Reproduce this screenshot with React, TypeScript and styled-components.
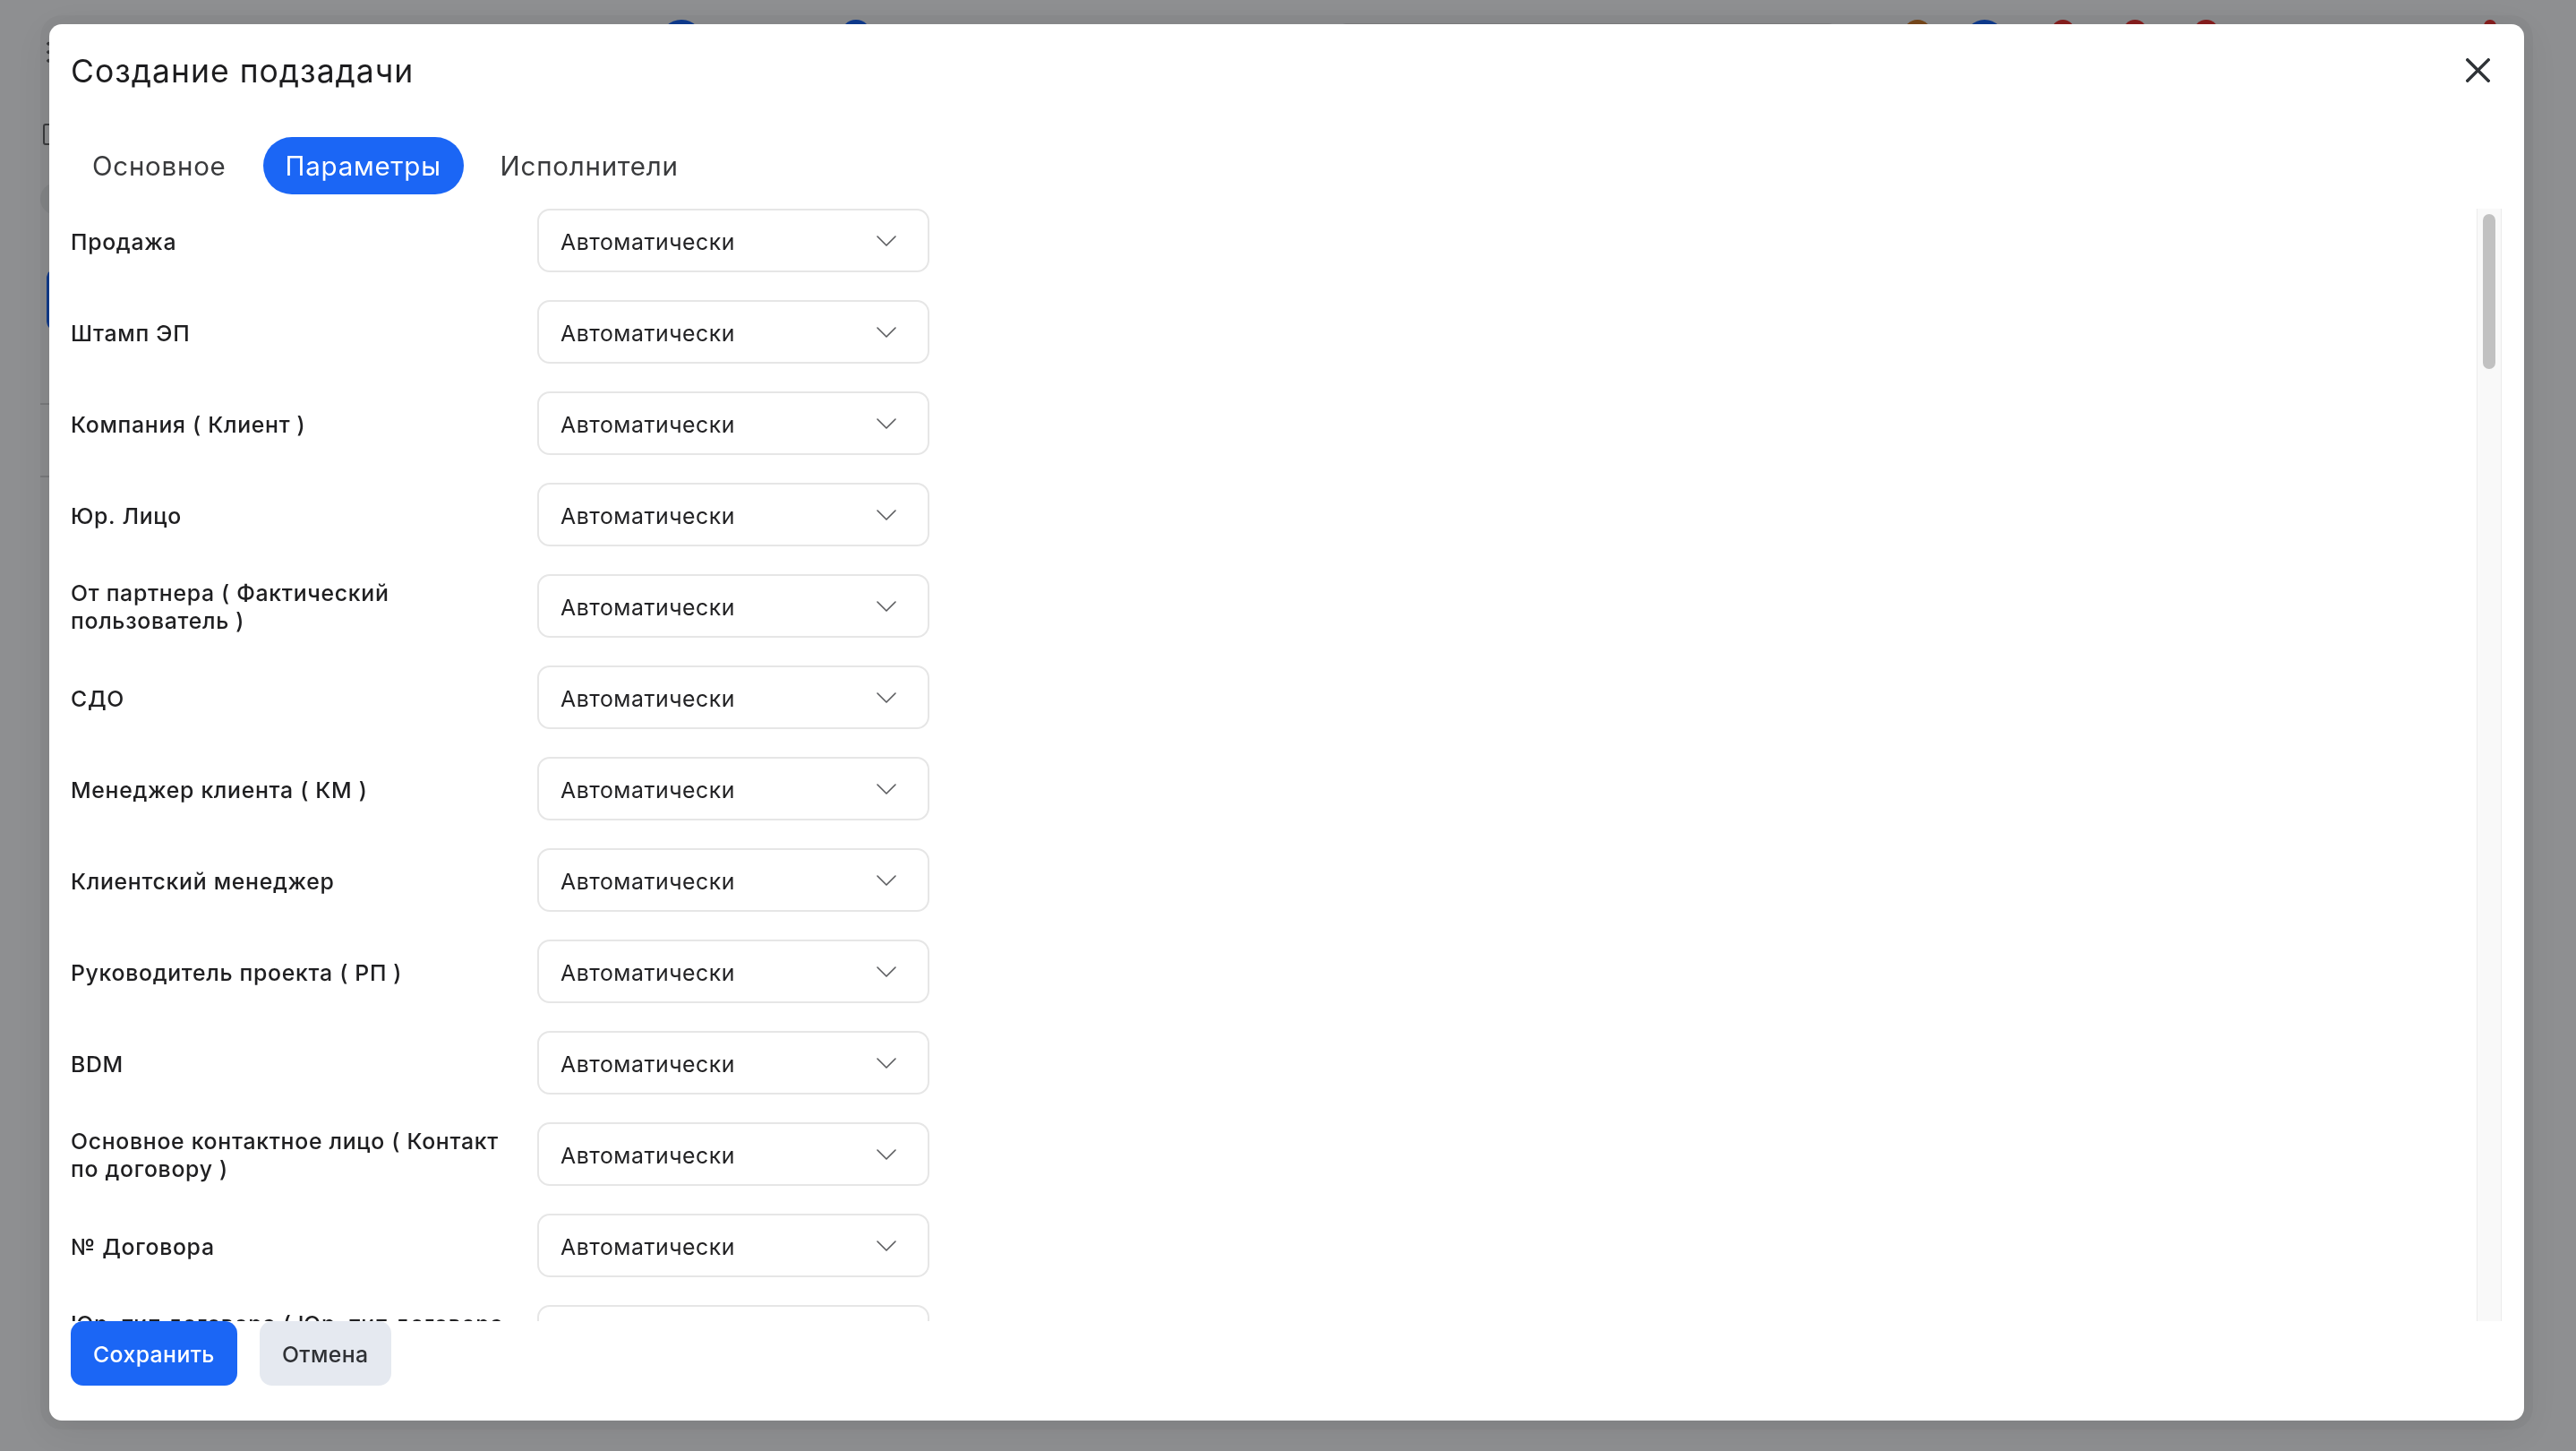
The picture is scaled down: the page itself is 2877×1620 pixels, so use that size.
import React from "react";
import styled, { createGlobalStyle } from "styled-components";

const GlobalStyle = createGlobalStyle`
  *, *::before, *::after { box-sizing: border-box; }
  html, body { margin: 0; padding: 0; }
  body {
    background: #8e8f91;
    font-family: Inter, "Noto Sans", "Liberation Sans", sans-serif;
    overflow: hidden;
  }
`;

/* ---------- dimmed application behind the dialog ---------- */

const Screen = styled.div`
  position: relative;
  width: 100vw;
  height: 100vh;
  overflow: hidden;
  background: #8e8f91;
`;

const AppShell = styled.div`
  display: flex;
  flex-direction: column;
  height: 100%;
`;

const TopBar = styled.div`
  display: flex;
  align-items: flex-start;
  height: 60px;
  padding-top: 22px;
`;

const TopDot = styled.span<{ $ml: number; $w: number; $color: string }>`
  display: block;
  margin-left: ${(p) => p.$ml}px;
  width: ${(p) => p.$w}px;
  height: ${(p) => p.$w}px;
  border-radius: 50%;
  background: ${(p) => p.$color};
`;

const TopSearch = styled.span<{ $ml: number }>`
  display: block;
  margin-left: ${(p) => p.$ml}px;
  margin-top: 4px;
  width: 554px;
  height: 40px;
  border-radius: 8px;
  background: #7f8082;
`;

const Rail = styled.aside`
  display: flex;
  flex-direction: column;
  align-items: flex-start;
  padding-left: 45px;
`;

const RailKebab = styled.span`
  margin: -16px 0 0 7px;
  width: 4px;
  height: 28px;
  background: radial-gradient(circle, #3b3c3e 1.6px, transparent 2px) 0 0 / 4px 9.5px repeat-y;
`;

const RailHome = styled.span`
  margin: 66px 0 0 3px;
  width: 22px;
  height: 24px;
  border: 2px solid #3b3c3e;
  border-radius: 3px;
`;

const RailAvatar = styled.span`
  margin-top: 42px;
  width: 36px;
  height: 36px;
  border-radius: 50%;
  background: #858789;
`;

const RailButton = styled.span`
  margin: 59px 0 0 7px;
  width: 60px;
  height: 71px;
  border-radius: 12px;
  background: #0f3a8d;
`;

const RailRule = styled.span<{ $mt: number }>`
  margin-top: ${(p) => p.$mt}px;
  width: 60px;
  height: 2px;
  background: #7b7c7e;
`;

/* ---------- dialog ---------- */

const Overlay = styled.div`
  position: fixed;
  inset: 0;
  display: flex;
  align-items: flex-start;
  padding: 27px 0 0 55px;
`;

const Modal = styled.div`
  width: 2764px;
  height: 1559px;
  background: #ffffff;
  border-radius: 14px;
  box-shadow: 0 0 0 10px rgba(0, 0, 0, 0.035), 0 10px 40px rgba(0, 0, 0, 0.08);
  display: flex;
  flex-direction: column;
  padding: 30px 25px 39px 24px;
`;

const Header = styled.header`
  display: flex;
  align-items: center;
  justify-content: space-between;
  height: 42px;
  flex-shrink: 0;
`;

const Title = styled.h2`
  margin: 0;
  padding-top: 3px;
  font-size: 35.5px;
  line-height: 42px;
  font-weight: 400;
  color: #1d1d1f;
  letter-spacing: 1px;
`;

const CloseButton = styled.button`
  width: 29px;
  height: 29px;
  margin-right: 12px;
  padding: 0;
  border: 0;
  background: none;
  display: grid;
  place-items: center;
  color: #2f3337;
  cursor: pointer;
`;

const Tabs = styled.nav`
  display: flex;
  gap: 16px;
  margin: 54px 0 0 -1px;
  flex-shrink: 0;
`;

const Tab = styled.button<{ $active?: boolean }>`
  height: 64px;
  padding: 0 25px;
  border: 0;
  border-radius: 32px;
  font-family: inherit;
  font-size: 29.5px;
  font-weight: 400;
  letter-spacing: 0.75px;
  background: ${(p) => (p.$active ? "#1b66f5" : "transparent")};
  color: ${(p) => (p.$active ? "#ffffff" : "#3a3b3d")};
  cursor: pointer;
`;

const Body = styled.div`
  flex: 1;
  min-height: 0;
  display: flex;
  margin-top: 16px;
`;

const FieldList = styled.div`
  flex: 1;
  min-width: 0;
  overflow: hidden;
  display: flex;
  flex-direction: column;
  gap: 31px;
`;

const Field = styled.div`
  display: grid;
  grid-template-columns: 497px 438px;
  column-gap: 24px;
  align-items: center;
  flex-shrink: 0;
`;

const Label = styled.label`
  padding-top: 3px;
  font-size: 24.8px;
  line-height: 31px;
  font-weight: 500;
  color: #1f1f21;
  letter-spacing: 0.7px;
`;

const Select = styled.div`
  height: 71px;
  border: 2px solid #e6e6e6;
  border-radius: 14px;
  display: flex;
  align-items: center;
  justify-content: space-between;
  padding: 3px 35px 0 24px;
  font-size: 24.8px;
  color: #222224;
  letter-spacing: 0.55px;
  background: #fff;
`;

const Chevron = styled.svg`
  width: 22px;
  height: 12px;
  flex-shrink: 0;
  margin-top: -3px;
`;

const ScrollTrack = styled.div`
  width: 28px;
  flex-shrink: 0;
  background: #f9f9f9;
  border-left: 1px solid #ebebeb;
  border-right: 1px solid #ebebeb;
  padding: 6px 6px;
`;

const ScrollThumb = styled.div`
  height: 173px;
  border-radius: 8px;
  background: #c1c1c1;
`;

const Footer = styled.footer`
  display: flex;
  gap: 25px;
  height: 72px;
  flex-shrink: 0;
`;

const Button = styled.button<{ $variant: "primary" | "secondary" }>`
  height: 72px;
  padding: 2px 25px 0;
  border: 0;
  border-radius: 14px;
  font-family: inherit;
  font-size: 24.8px;
  font-weight: 500;
  letter-spacing: 0.4px;
  background: ${(p) => (p.$variant === "primary" ? "#1b66f5" : "#e5e9f0")};
  color: ${(p) => (p.$variant === "primary" ? "#ffffff" : "#2f3135")};
  cursor: pointer;
`;

const fields = [
  "Продажа",
  "Штамп ЭП",
  "Компания ( Клиент )",
  "Юр. Лицо",
  "От партнера ( Фактический пользователь )",
  "СДО",
  "Менеджер клиента ( КМ )",
  "Клиентский менеджер",
  "Руководитель проекта ( РП )",
  "BDM",
  "Основное контактное лицо ( Контакт по договору )",
  "№ Договора",
  "Юр. тип договора ( Юр. тип договора клиента )",
];

const ChevronIcon = () => (
  <Chevron viewBox="0 0 22 12" fill="none">
    <polyline points="1,1 11,11 21,1" stroke="#5a5b5e" strokeWidth="1.6" strokeLinecap="round" strokeLinejoin="round" />
  </Chevron>
);

const CloseIcon = () => (
  <svg width="27" height="27" viewBox="0 0 27 27" fill="none">
    <path d="M1.8 1.8 L25.2 25.2 M25.2 1.8 L1.8 25.2" stroke="currentColor" strokeWidth="3.4" strokeLinecap="square" />
  </svg>
);

export default function App() {
  return (
    <>
      <GlobalStyle />
      <Screen>
        <AppShell>
          <TopBar>
            <TopDot $ml={737} $w={48} $color="#0f3d92" />
            <TopDot $ml={154} $w={34} $color="#0f3d92" />
            <TopSearch $ml={523} />
            <TopDot $ml={76} $w={31} $color="#7a4a1c" />
            <TopDot $ml={37} $w={45} $color="#0f3d92" />
            <TopDot $ml={52} $w={26} $color="#8b1f1f" />
            <TopDot $ml={54} $w={27} $color="#8b1f1f" />
            <TopDot $ml={52} $w={28} $color="#8b1f1f" />
            <TopDot $ml={296} $w={14} $color="#8b1f1f" />
          </TopBar>
          <Rail>
            <RailKebab />
            <RailHome />
            <RailAvatar />
            <RailButton />
            <RailRule $mt={80} />
            <RailRule $mt={79} />
          </Rail>
        </AppShell>

        <Overlay>
          <Modal role="dialog" aria-label="Создание подзадачи">
            <Header>
              <Title>Создание подзадачи</Title>
              <CloseButton aria-label="Закрыть">
                <CloseIcon />
              </CloseButton>
            </Header>

            <Tabs>
              <Tab>Основное</Tab>
              <Tab $active>Параметры</Tab>
              <Tab>Исполнители</Tab>
            </Tabs>

            <Body>
              <FieldList>
                {fields.map((f) => (
                  <Field key={f}>
                    <Label>{f}</Label>
                    <Select>
                      <span>Автоматически</span>
                      <ChevronIcon />
                    </Select>
                  </Field>
                ))}
              </FieldList>
              <ScrollTrack>
                <ScrollThumb />
              </ScrollTrack>
            </Body>

            <Footer>
              <Button $variant="primary">Сохранить</Button>
              <Button $variant="secondary">Отмена</Button>
            </Footer>
          </Modal>
        </Overlay>
      </Screen>
    </>
  );
}
